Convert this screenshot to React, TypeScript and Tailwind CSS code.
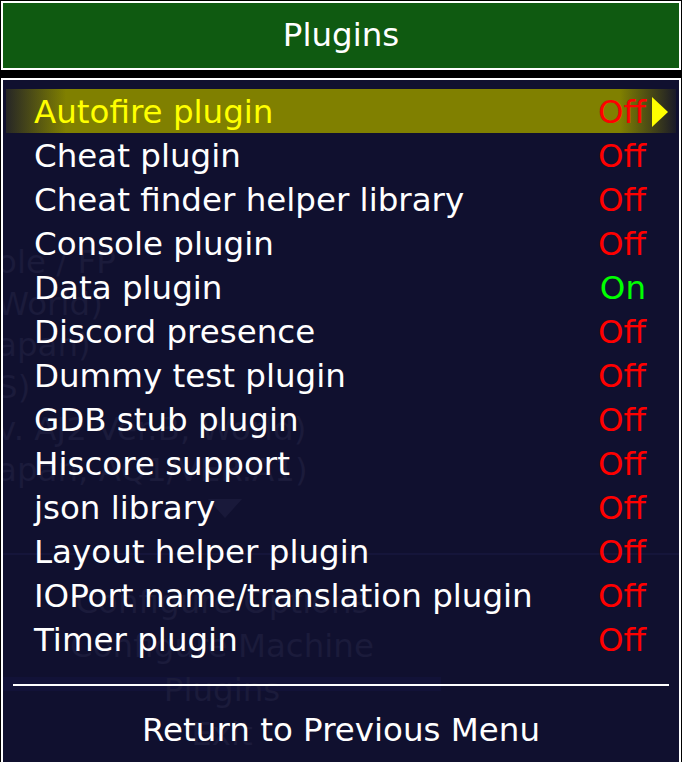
import React from "react";

const items: { name: string; on: boolean }[] = [
  { name: "Autofire plugin", on: false },
  { name: "Cheat plugin", on: false },
  { name: "Cheat finder helper library", on: false },
  { name: "Console plugin", on: false },
  { name: "Data plugin", on: true },
  { name: "Discord presence", on: false },
  { name: "Dummy test plugin", on: false },
  { name: "GDB stub plugin", on: false },
  { name: "Hiscore support", on: false },
  { name: "json library", on: false },
  { name: "Layout helper plugin", on: false },
  { name: "IOPort name/translation plugin", on: false },
  { name: "Timer plugin", on: false },
];

const ghostLeft = ["ole / FP", "World)", "apan)", "S)", "v. AJ2 Ver.B, World)", "apan, AQ1/VER.A1)"];
const ghostMenu = ["Configure Options", "Configure Machine", "Plugins", "Exit"];

function Ghost() {
  return (
    <div className="absolute inset-0 pointer-events-none text-[#1b1b3b] text-[32.5px] leading-none flex flex-col pt-[166px]">
      {ghostLeft.map((t) => (
        <div key={t} className="h-[44px] -ml-[6px] whitespace-nowrap">
          {t}
        </div>
      ))}
      <svg className="ml-[204px] mt-[3px]" width="36" height="20" viewBox="0 0 36 20">
        <polygon points="0,0 36,0 18,20" fill="#19193a" />
      </svg>
      <div className="mt-[35px] h-[2px] bg-[#15153a]" />
      <div className="w-[438px] flex flex-col items-center pt-[31px]">
        {ghostMenu.map((t) => (
          <div
            key={t}
            className={"h-[44px] w-full text-center " + (t === "Plugins" ? "bg-[linear-gradient(to_bottom,transparent_0px,transparent_3px,#121238_3px,#121238_17px,transparent_17px)]" : "")}
          >
            {t}
          </div>
        ))}
      </div>
    </div>
  );
}

export default function App() {
  return (
    <div
      className="w-[682px] h-[762px] bg-black overflow-hidden flex flex-col pt-[1px] px-[1px]"
      style={{ fontFamily: "'DejaVu Sans', Verdana, sans-serif" }}
    >
      <div className="h-[69px] border-2 border-white bg-[#0f5a11] flex items-center justify-center text-white text-[32.5px] leading-none">
        <span>Plugins</span>
      </div>
      <div className="mt-[8px] flex-1 relative overflow-hidden border-2 border-b-0 border-white bg-[#10102f]">
        <Ghost />
        <div className="relative flex flex-col pt-[9px] px-[3px]">
          {items.map((it, i) => {
            const sel = i === 0;
            return (
              <div
                key={it.name}
                className={
                  "h-[44px] flex items-start justify-between pt-[7px] text-[32.5px] leading-none " +
                  (sel
                    ? "bg-[linear-gradient(to_right,#262626_0px,#808000_60px,#808000_calc(100%-56px),#1a1a28_100%)]"
                    : "")
                }
              >
                <span className={"pl-[28px] whitespace-nowrap " + (sel ? "text-[#ffff00]" : "text-white")}>{it.name}</span>
                <span className="flex items-start pr-[8px]">
                  <span className={it.on ? "text-[#00ff00]" : "text-[#ff0000]"}>{it.on ? "On" : "Off"}</span>
                  <span className="w-[22px] flex justify-end pt-[1px]">
                    {sel && (
                      <svg width="16" height="30" viewBox="0 0 16 30">
                        <polygon points="0,0 16,15 0,30" fill="#ffff00" />
                      </svg>
                    )}
                  </span>
                </span>
              </div>
            );
          })}
          <div className="mt-[23px] mx-[7px] h-[2px] bg-white" />
          <div className="pt-[28px] flex justify-center text-white text-[32.5px] leading-none">
            <span>Return to Previous Menu</span>
          </div>
        </div>
      </div>
    </div>
  );
}
